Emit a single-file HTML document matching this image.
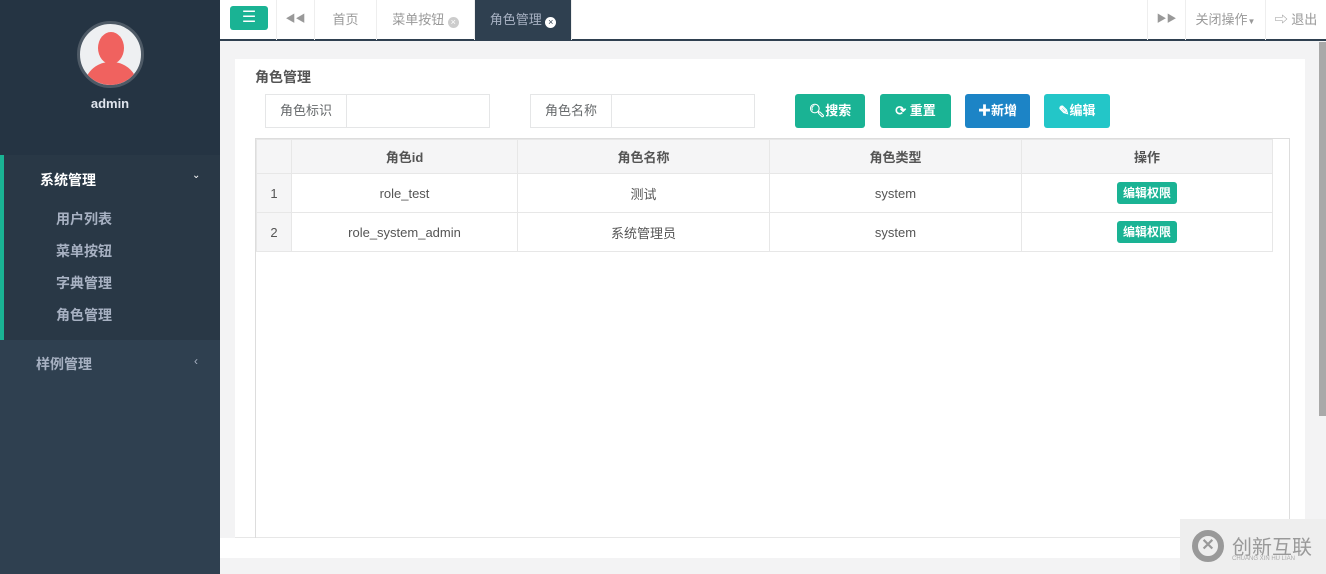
<!DOCTYPE html><html><head><meta charset="utf-8"><style>
*{margin:0;padding:0;box-sizing:border-box}
body{width:1326px;height:574px;overflow:hidden;position:relative;background:#f3f3f4;font-family:"Liberation Sans","Noto Sans CJK SC",sans-serif;font-size:13px;color:#676a6c}
.abs{position:absolute}
.sb{left:0;top:0;width:220px;height:574px;background:#2f4050}
.sbtop{left:0;top:0;width:220px;height:155px;background:#253443}
.act{left:0;top:155px;width:220px;height:185px;background:#293846;border-left:4px solid #1ab394}
.top{left:220px;top:0;width:1106px;height:41px;background:#fff;border-bottom:2px solid #2f4050}
.tab{top:0;height:40px;line-height:40px;border-right:1px solid #eee;color:#999;text-align:center}
.btn{top:94px;height:34px;border-radius:3px;color:#fff;font-weight:bold;line-height:34px;text-align:center;font-size:13px}
table{border-collapse:collapse;position:absolute;left:256px;top:139px;width:1017px}
td,th{border:1px solid #e7e7e7;text-align:center;height:39px;font-size:13px;color:#555}
th{height:34px;background:#f5f5f6;font-weight:bold}
.ok{display:inline-block;background:#1ab394;color:#fff;font-weight:bold;font-size:12px;width:60px;height:22px;line-height:22px;border-radius:3px}
.x{display:inline-block;width:11px;height:11px;border-radius:50%;font-size:9px;line-height:11px;color:#fff;vertical-align:-1px}
</style></head><body>
<div class="abs sb"></div><div class="abs sbtop"></div>
<div class="abs" style="left:77px;top:21px;width:67px;height:67px;border-radius:50%;background:#eef0f2;border:3px solid #4e5a66;overflow:hidden">
<div class="abs" style="left:18px;top:8px;width:26px;height:32px;border-radius:50%;background:#f0625f"></div>
<div class="abs" style="left:4px;top:38px;width:54px;height:40px;border-radius:26px 26px 0 0;background:#f0625f"></div></div>
<div class="abs" style="left:0;top:96px;width:220px;text-align:center;color:#dfe4ed;font-weight:bold;font-size:13px">admin</div>
<div class="abs act"></div>
<div class="abs" style="left:40px;top:170px;color:#fff;font-weight:bold;font-size:14px">系统管理</div>
<div class="abs" style="left:192px;top:170px;color:#fff;font-size:10px">⌄</div>
<div class="abs" style="left:56px;top:209px;color:#a7b1c2;font-weight:bold;font-size:14px">用户列表</div>
<div class="abs" style="left:56px;top:241px;color:#a7b1c2;font-weight:bold;font-size:14px">菜单按钮</div>
<div class="abs" style="left:56px;top:273px;color:#a7b1c2;font-weight:bold;font-size:14px">字典管理</div>
<div class="abs" style="left:56px;top:305px;color:#a7b1c2;font-weight:bold;font-size:14px">角色管理</div>
<div class="abs" style="left:36px;top:354px;color:#a7b1c2;font-weight:bold;font-size:14px">样例管理</div>
<div class="abs" style="left:194px;top:354px;color:#a7b1c2;font-size:12px">‹</div>
<div class="abs top"></div>
<div class="abs" style="left:230px;top:6px;width:38px;height:24px;background:#1ab394;border-radius:3px;color:#fff;text-align:center;line-height:23px;font-size:16px">☰</div>
<div class="abs tab" style="left:276px;width:39px;border-left:1px solid #eee;font-size:10px;color:#999">◀◀</div>
<div class="abs tab" style="left:315px;width:62px">首页</div>
<div class="abs tab" style="left:377px;width:98px">菜单按钮 <span class="x" style="background:#ccc">×</span></div>
<div class="abs tab" style="left:475px;width:97px;background:#2f4050;color:#a7b1c2">角色管理 <span class="x" style="background:#fff;color:#2f4050">×</span></div>
<div class="abs tab" style="left:1147px;width:39px;border-left:1px solid #eee;font-size:10px;color:#999">▶▶</div>
<div class="abs tab" style="left:1186px;width:80px">关闭操作<span style="font-size:8px">▼</span></div>
<div class="abs tab" style="left:1266px;width:60px;border:none">⇨ 退出</div>
<div class="abs" style="left:235px;top:59px;width:1070px;height:479px;background:#fff;border-bottom:1px solid #e7e7e7"></div>
<div class="abs" style="left:220px;top:538px;width:1106px;height:20px;background:#fff"></div>
<div class="abs" style="left:1319px;top:42px;width:7px;height:374px;background:#a9a9a9"></div>
<div class="abs" style="left:255px;top:67px;font-weight:bold;font-size:14px;color:#555">角色管理</div>
<div class="abs" style="left:265px;top:94px;width:225px;height:34px;border:1px solid #e5e6e7"></div>
<div class="abs" style="left:265px;top:94px;width:82px;height:34px;border:1px solid #e5e6e7;line-height:32px;text-align:center">角色标识</div>
<div class="abs" style="left:530px;top:94px;width:225px;height:34px;border:1px solid #e5e6e7"></div>
<div class="abs" style="left:530px;top:94px;width:82px;height:34px;border:1px solid #e5e6e7;line-height:32px;text-align:center">角色名称</div>
<div class="abs btn" style="left:795px;width:70px;background:#1ab394">🔍︎搜索</div>
<div class="abs btn" style="left:880px;width:71px;background:#1ab394">⟳ 重置</div>
<div class="abs btn" style="left:965px;width:65px;background:#1c84c6">✚新增</div>
<div class="abs btn" style="left:1044px;width:66px;background:#23c6c8">✎编辑</div>
<div class="abs" style="left:255px;top:138px;width:1035px;height:400px;border:1px solid #ddd;border-bottom:none"></div>
<table><tr><th style="width:35px"></th><th style="width:226px">角色id</th><th style="width:252px">角色名称</th><th style="width:252px">角色类型</th><th>操作</th></tr>
<tr><td style="background:#f5f5f6">1</td><td>role_test</td><td>测试</td><td>system</td><td><span class="ok">编辑权限</span></td></tr>
<tr><td style="background:#f5f5f6">2</td><td>role_system_admin</td><td>系统管理员</td><td>system</td><td><span class="ok">编辑权限</span></td></tr></table>
<div class="abs" style="left:1180px;top:519px;width:146px;height:55px;background:#eee"></div>
<div class="abs" style="left:1192px;top:530px;width:32px;height:32px;border-radius:50%;border:6px solid #999;color:#999;font-weight:bold;text-align:center;line-height:20px;font-size:16px">✕</div>
<div class="abs" style="left:1232px;top:531px;font-size:20px;color:#999">创新互联</div>
<div class="abs" style="left:1232px;top:556px;font-size:6px;color:#aaa">CHUANG XIN HU LIAN</div>
</body></html>
